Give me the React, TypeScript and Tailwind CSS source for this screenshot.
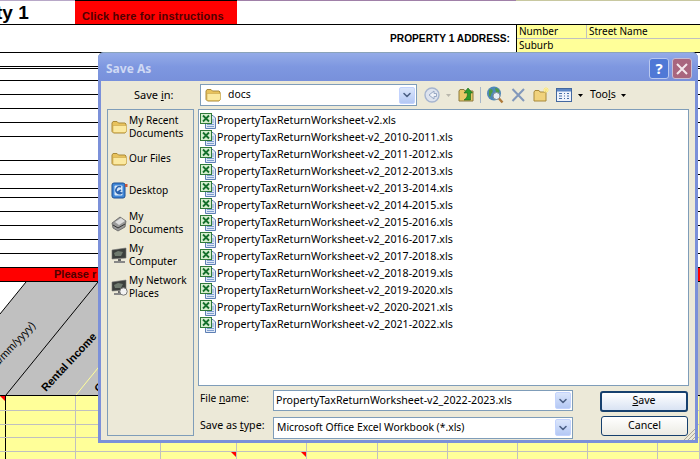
import { ReactNode } from 'react'
import { ChevronDown } from 'lucide-react'

const FILES = [
  'PropertyTaxReturnWorksheet-v2.xls',
  'PropertyTaxReturnWorksheet-v2_2010-2011.xls',
  'PropertyTaxReturnWorksheet-v2_2011-2012.xls',
  'PropertyTaxReturnWorksheet-v2_2012-2013.xls',
  'PropertyTaxReturnWorksheet-v2_2013-2014.xls',
  'PropertyTaxReturnWorksheet-v2_2014-2015.xls',
  'PropertyTaxReturnWorksheet-v2_2015-2016.xls',
  'PropertyTaxReturnWorksheet-v2_2016-2017.xls',
  'PropertyTaxReturnWorksheet-v2_2017-2018.xls',
  'PropertyTaxReturnWorksheet-v2_2018-2019.xls',
  'PropertyTaxReturnWorksheet-v2_2019-2020.xls',
  'PropertyTaxReturnWorksheet-v2_2020-2021.xls',
  'PropertyTaxReturnWorksheet-v2_2021-2022.xls',
]

// heights of the ruled rows left of the dialog
const RULED_ROWS = [14, 2, 12, 14, 14, 14, 14, 24, 14, 14, 9, 14, 14, 14, 14, 14]
const COLUMNS = [6, 70, 85, 76, 70, 71, 70, 70, 70, 70, 42]
const YELLOW_ROWS = [15, 14, 13, 14, 8]

function FolderIcon() {
  return (
    <svg width="17" height="16" viewBox="0 0 17 16" className="shrink-0">
      <path d="M1 4 L2 2.5 H6 L7.5 4 H14 L15 5 V13 L14 14 H2.5 L1 12.5 Z" fill="#e8c25c" stroke="#a98a3a" />
      <path d="M2 6.5 H15.5 V12.5 L14 13.5 H3 L2 12.5 Z" fill="#fbe9a0" stroke="#c9a64a" strokeWidth="0.6" />
    </svg>
  )
}

function XlsIcon() {
  return (
    <svg width="16" height="16" viewBox="0 0 16 16" className="shrink-0">
      <path d="M5.5 2.5 H13 L15.5 5 V15.5 H5.5 Z" fill="#dfe8f6" stroke="#5d7fb4" />
      <path d="M7 11.5 H14 M7 13.5 H14 M12 7 H14 M12 9 H14" stroke="#7f9fd0" />
      <rect x="0.5" y="0.5" width="11" height="10" fill="#d7efd0" stroke="#2f7a3a" />
      <path d="M3 2.5 L9 8.5 M9 2.5 L3 8.5" stroke="#15702c" strokeWidth="1.8" />
    </svg>
  )
}

function DesktopIcon() {
  return (
    <svg width="17" height="17" viewBox="0 0 17 17" className="shrink-0">
      <rect x="1" y="1" width="13" height="15" rx="2" fill="#3f86d6" stroke="#1d4f94" />
      <rect x="3.5" y="3.5" width="8" height="10" rx="1" fill="#dbe9f8" />
      <path d="M10 5 A3.5 3.5 0 1 0 10.5 11 L7 10 L10 8" fill="none" stroke="#2a62ad" strokeWidth="1.6" />
      <rect x="14" y="2" width="2.5" height="3" fill="#c8583a" />
    </svg>
  )
}

function DocumentsIcon() {
  return (
    <svg width="17" height="17" viewBox="0 0 17 17" className="shrink-0">
      <path d="M1 8 L9 2 L15 6 L14 12 L7 16 L2 13 Z" fill="#9a9a9a" stroke="#555" strokeWidth="0.7" />
      <path d="M4 7 L10 3 L14 6 L8 10 Z" fill="#dedede" />
      <path d="M2 10 L7 13 L14 9" stroke="#333" fill="none" />
    </svg>
  )
}

function ComputerIcon({ network = false }: { network?: boolean }) {
  return (
    <svg width="17" height="17" viewBox="0 0 17 17" className="shrink-0">
      <path d="M1 3 L15 1 V11 L1 12 Z" fill="#3b3f3d" stroke="#777" strokeWidth="0.6" />
      <path d="M3 6 L7 4 L12 5 L10 9 L4 9 Z" fill="#6f7a6f" />
      <rect x="7" y="12" width="3" height="2" fill="#666" />
      <rect x="3" y="14" width="11" height="2" fill="#888" />
      {network && <circle cx="12.5" cy="12.5" r="3.7" fill="#f2f2f2" stroke="#777" />}
    </svg>
  )
}

function ComboArrow() {
  return (
    <div className="w-[16px] h-[17px] rounded-[2px] bg-gradient-to-b from-[#dbe6fb] to-[#b4c8f4] border border-[#c3d3fd] flex items-center justify-center shrink-0">
      <ChevronDown size={12} strokeWidth={3.2} className="text-[#4d6185]" />
    </div>
  )
}

function Combo({ width, height, children }: { width: string; height: string; children: ReactNode }) {
  return (
    <div className={`${width} ${height} bg-white border border-[#7f9db9] flex items-center justify-between pl-[2px] pr-[1px]`}>
      {children}
    </div>
  )
}

function Place({ icon, label, className }: { icon: ReactNode; label: string; className: string }) {
  return (
    <div className={`flex items-center gap-[1px] pl-[3px] leading-[13px] text-[10.1px] ${className}`}>
      {icon}
      <span className="w-[66px]">{label}</span>
    </div>
  )
}

function Toolbar() {
  return (
    <div className="flex items-center h-[22px] ml-[3px] relative">
      <svg width="20" height="20" viewBox="0 0 20 20" className="ml-[2px]">
        <circle cx="10" cy="10" r="7" fill="#dde3ee" stroke="#a5b4cf" strokeWidth="1.4" />
        <path d="M12 6 L7 10 L12 14 V11.5 H14.5 V8.5 H12 Z" fill="#eef1f7" stroke="#98a8c4" />
      </svg>
      <svg width="5" height="3" viewBox="0 0 5 3" className="ml-[4px]">
        <path d="M0 0 H5 L2.5 3 Z" fill="#b9b7ac" />
      </svg>
      <svg width="17" height="16" viewBox="0 0 17 16" className="ml-[7px]">
        <path d="M1 4 L2 2.5 H6 L7 4 H15 V14 H1 Z" fill="#e8c868" stroke="#8c7a3c" />
        <path d="M10 1 L14.5 6 H12.5 V13 H6 C9 11 9.5 9 9.5 6 H6 Z" fill="#2c9a2c" stroke="#186418" strokeWidth="0.6" />
      </svg>
      <div className="w-px h-[16px] bg-[#a7b6c8] ml-[5px]" />
      <svg width="18" height="18" viewBox="0 0 18 18" className="ml-[5px]">
        <circle cx="8" cy="7.5" r="7" fill="#4f88b8" />
        <path d="M3 4 C6 2 8 5 6 7 C4 9 6 12 3 10 Z M9 2 C13 2 14 5 13 7 L10 6 Z" fill="#4f9a48" />
        <circle cx="10.5" cy="10" r="3.5" fill="#e8eef4" stroke="#7e8a96" />
        <path d="M13 12.5 L16.5 16.5" stroke="#b07a3a" strokeWidth="2.4" />
      </svg>
      <svg width="14" height="14" viewBox="0 0 14 14" className="ml-[7px]">
        <path d="M1.5 1 L13 13 M13 1 L1.5 13" stroke="#8298bb" strokeWidth="2" />
      </svg>
      <svg width="17" height="16" viewBox="0 0 17 16" className="ml-[8px]">
        <path d="M1 5 L2 3.5 H6 L7 5 H13 V14 H1 Z" fill="#f0d27c" stroke="#a98a3a" />
        <path d="M13 0 V6 M10 3 H16 M11 1 L15 5 M15 1 L11 5" stroke="#ffe97a" strokeWidth="1" />
      </svg>
      <svg width="16" height="14" viewBox="0 0 16 14" className="ml-[6px]">
        <rect x="0.5" y="0.5" width="15" height="13" fill="#eef3fb" stroke="#43689f" />
        <rect x="1" y="1" width="14" height="2.5" fill="#5d86c4" />
        <path d="M3 5.5 H6 M3 8 H6 M3 10.5 H6 M8 5.5 H9 M8 8 H9 M8 10.5 H9 M11 5.5 H13 M11 8 H13 M11 10.5 H13" stroke="#476fa8" />
      </svg>
      <svg width="5" height="3" viewBox="0 0 5 3" className="ml-[6px]">
        <path d="M0 0 H5 L2.5 3 Z" fill="#000" />
      </svg>
      <span className="ml-[7px]">
        Too<span className="underline">l</span>s
      </span>
      <svg width="5" height="3" viewBox="0 0 5 3" className="ml-[5px]">
        <path d="M0 0 H5 L2.5 3 Z" fill="#000" />
      </svg>
    </div>
  )
}

function SaveDialog() {
  return (
    <div className="absolute left-[98px] top-[52px] w-[600px] h-[391px] flex flex-col rounded-t-[6px] bg-[#7b90d9] font-['Noto_Sans',sans-serif] text-[10.65px] text-black">
      {/* Title bar */}
      <div className="h-[29px] shrink-0 rounded-t-[6px] border-t border-[#8ba3b9] bg-gradient-to-b from-[#94abe8] via-[#7e97e0] to-[#7890db] flex items-center justify-between pl-[8px] pr-[6px]">
        <span className="font-bold text-[12px] text-[#cfd9f4] mt-[3px]">Save As</span>
        <div className="flex gap-[3px] mt-[3px]">
          <div className="w-[20px] h-[21px] rounded-[3px] border border-[#b9c8ef] bg-[#4f78d6] text-white font-bold text-[15px] leading-[19px] text-center">?</div>
          <div className="w-[20px] h-[21px] rounded-[3px] border border-[#c9bcd0] bg-[#a9667e] flex items-center justify-center">
            <svg width="12" height="12" viewBox="0 0 12 12">
              <path d="M1 1 L11 11 M11 1 L1 11" stroke="#f4e8ec" strokeWidth="2" />
            </svg>
          </div>
        </div>
      </div>

      {/* Client area */}
      <div className="relative mx-[3px] mb-[3px] flex-1 bg-[#ece9d8] flex flex-col">
        <div className="h-[28px] shrink-0 flex items-center">
          <span className="w-[99px] pl-[33px] text-[11px]">
            Save <span className="underline">i</span>n:
          </span>
          <Combo width="w-[217px]" height="h-[22px]">
            <div className="flex items-center gap-[6px] pl-[2px]">
              <FolderIcon />
              <span className="text-[10.4px]">docs</span>
            </div>
            <ComboArrow />
          </Combo>
          <Toolbar />
        </div>

        <div className="flex flex-1">
          <div className="ml-[6px] mb-[4px] w-[87px] border border-[#7f9db9] flex flex-col pt-[3px]">
            <Place icon={<FolderIcon />} label="My Recent Documents" className="h-[28px]" />
            <Place icon={<FolderIcon />} label="Our Files" className="h-[21px] mt-[7px]" />
            <Place icon={<DesktopIcon />} label="Desktop" className="h-[21px] mt-[11px]" />
            <Place icon={<DocumentsIcon />} label="My Documents" className="h-[28px] mt-[8px]" />
            <Place icon={<ComputerIcon />} label="My Computer" className="h-[28px] mt-[4px]" />
            <Place icon={<ComputerIcon network />} label="My Network Places" className="h-[28px] mt-[4px]" />
          </div>

          <div className="ml-[4px] w-[491px] flex flex-col">
            <div className="h-[277px] bg-white border border-[#7f9db9] pl-[1px] pt-[2px]">
              {FILES.map((file) => (
                <div key={file} className="h-[17px] flex items-center gap-[1px]">
                  <XlsIcon />
                  <span>{file}</span>
                </div>
              ))}
            </div>

            <div className="flex items-center h-[25px] mt-[2px]">
              <span className="w-[75px] pl-[2px] text-[10.2px] -mt-[4px]">
                File <span className="underline">n</span>ame:
              </span>
              <Combo width="w-[300px]" height="h-[21px]">
                <span>PropertyTaxReturnWorksheet-v2_2022-2023.xls</span>
                <ComboArrow />
              </Combo>
              <div className="ml-[27px] mt-[1px] w-[88px] h-[21px] rounded-[3px] border-2 border-[#16406e] bg-gradient-to-b from-white to-[#d9e3f3] flex items-center justify-center">
                <span>
                  <span className="underline">S</span>ave
                </span>
              </div>
            </div>
            <div className="flex items-center h-[25px] mt-[2px]">
              <span className="w-[75px] pl-[2px] -mt-[3px]">
                Save as <span className="underline">t</span>ype:
              </span>
              <Combo width="w-[300px]" height="h-[22px]">
                <span className="pl-[1px] text-[10.35px]">Microsoft Office Excel Workbook (*.xls)</span>
                <ComboArrow />
              </Combo>
              <div className="ml-[28px] -mt-[3px] w-[87px] h-[20px] rounded-[3px] border border-[#16406e] bg-gradient-to-b from-white to-[#ecebe4] flex items-center justify-center">
                Cancel
              </div>
            </div>
          </div>
        </div>

        {/* Resize grip */}
        <svg width="11" height="11" viewBox="0 0 11 11" className="absolute right-0 bottom-0">
          <path d="M0 11 L11 0 M4 11 L11 4 M8 11 L11 8" stroke="#aca899" />
        </svg>
      </div>
    </div>
  )
}

function HeaderDiagonals() {
  return (
    <svg width="700" height="113" viewBox="0 0 700 113" className="block">
      <path d="M-66 113 L26 0 H700 V113 Z" fill="#c0c0c0" />
      <path d="M0 32 L26 0" stroke="#000" />
      <path d="M6 113 L98 0" stroke="#000" />
      <path d="M76 113 L168 0" stroke="#ffff99" />
      <text transform="translate(46 110) rotate(-47)" fontFamily="Liberation Sans" fontWeight="700" fontSize="11">Rental Income</text>
      <text transform="translate(-9 92) rotate(-47)" fontFamily="Liberation Sans" fontSize="11">(dd/mm/yyyy)</text>
      <text transform="translate(99 111) rotate(-47)" fontFamily="Liberation Sans" fontWeight="700" fontSize="11">Other</text>
    </svg>
  )
}

export default function App() {
  return (
    <div className="relative w-[700px] h-[459px] overflow-hidden bg-white font-['Liberation_Sans',sans-serif] text-black">
      {/* Sliver of the row above */}
      <div className="h-[1px] flex">
        <div className="w-[75px] bg-[#b8a8c8]" />
        <div className="w-[162px] bg-black" />
        <div className="w-[279px] bg-[#a080a8]" />
        <div className="flex-1 bg-[#c8c8a0]" />
      </div>

      {/* Top row */}
      <div className="h-[24px] border-b border-black flex items-center">
        <span className="w-[75px] text-[19px] font-bold -ml-[4px] shrink-0 leading-none">ty 1</span>
        <div className="w-[162px] h-[23px] ml-[4px] bg-[#ff0000] font-bold text-[11px] leading-[13px] text-[#500000] flex items-end pb-[1px] pl-[7px] tracking-[0.2px]">
          Click here for instructions
        </div>
      </div>

      {/* Address row */}
      <div className="h-[27px] flex">
        <div className="w-[517px] border-r border-black flex items-center justify-end pr-[6px] text-[10.2px] font-bold">
          PROPERTY 1 ADDRESS:
        </div>
        <div className="flex-1 bg-[#ffff99] flex flex-col text-[10px] font-['Noto_Sans',sans-serif]">
          <div className="h-[14px] flex border-b border-[#c0c0c0] leading-[13px]">
            <div className="w-[70px] border-r border-[#c0c0c0] pl-[2px]">Number</div>
            <div className="pl-[2px]">Street Name</div>
          </div>
          <div className="h-[13px] leading-[12px] pl-[2px]">Suburb</div>
        </div>
      </div>

      {/* Ruled rows behind the dialog */}
      {RULED_ROWS.map((h, i) => (
        <div key={i} style={{ height: h }} className="border-t border-black" />
      ))}

      {/* Warning strip */}
      <div className="h-[15px] bg-[#ff0000] border-y border-black text-[11px] font-bold text-[#500000] leading-[13px] pl-[54px]">
        Please r
      </div>

      <HeaderDiagonals />

      {/* Yellow data grid */}
      <div className="bg-[#ffff99] border-t border-black">
        {YELLOW_ROWS.map((h, r) => (
          <div key={r} style={{ height: h }} className="flex border-b border-[#c0c0c0]">
            {COLUMNS.map((w, c) => (
              <div
                key={c}
                style={{ width: w }}
                className={c === 0 ? 'border-r border-black' : 'border-r border-[#c0c0c0]'}
              />
            ))}
          </div>
        ))}
      </div>

      {/* Comment markers */}
      <div className="absolute left-0 top-[396px] border-t-[5px] border-l-[5px] border-t-[#ff0000] border-l-transparent" />
      <div className="absolute left-[231px] top-[452px] border-t-[5px] border-l-[5px] border-t-[#ff0000] border-l-transparent" />
      <div className="absolute left-[301px] top-[452px] border-t-[5px] border-l-[5px] border-t-[#ff0000] border-l-transparent" />

      <SaveDialog />
    </div>
  )
}
